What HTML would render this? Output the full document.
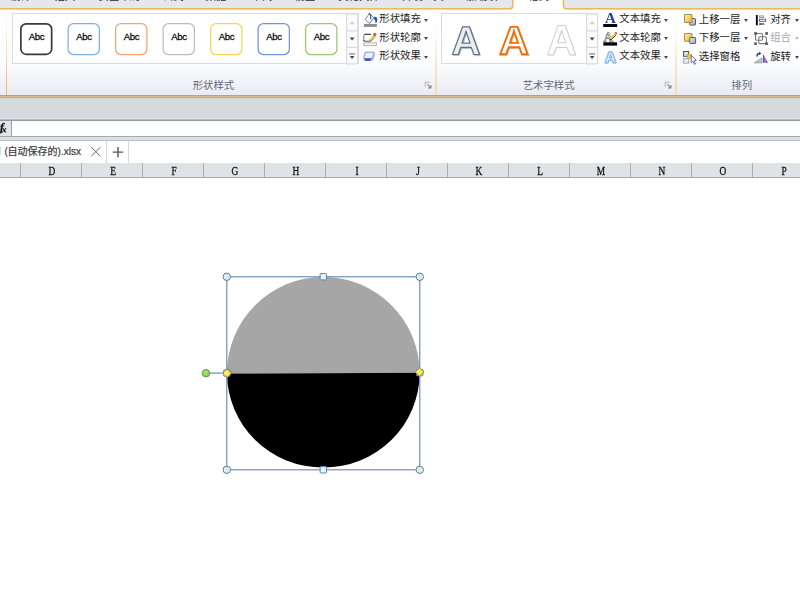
<!DOCTYPE html>
<html lang="zh-CN">
<head>
<meta charset="utf-8">
<title>Excel - 格式</title>
<style>
*{box-sizing:border-box;margin:0;padding:0}
html,body{width:800px;height:600px;overflow:hidden;background:#fff}
body{position:relative;font-family:"Liberation Sans",sans-serif;font-size:11px;color:#1a1a1a}
.abs,.cj,.ic,#stage div,#stage svg.a{position:absolute}
.cj{display:block;overflow:visible;white-space:nowrap;font-family:"Liberation Sans","Noto Sans CJK SC",sans-serif;font-size:10.4px;line-height:12.48px}
.cj.ab{font-size:9.6px;line-height:18.48px;color:#0c0c0c;letter-spacing:-.35px;-webkit-text-stroke:.28px #0c0c0c}
.cj.dt{font-size:10px;line-height:19px;color:#3a3a3a;-webkit-text-stroke:.2px #3a3a3a}
#stage{position:absolute;left:0;top:0;width:800px;height:600px;overflow:hidden}

/* tab strip */

/* ribbon body */
#rib{left:0;top:9.5px;width:800px;height:86px;background:linear-gradient(#fff 0,#fdfdfe 58%,#f8f9fb 70%,#f1f3f6 83%,#e8ebef 100%)}
#ribB1{left:0;top:95px;width:800px;height:2px;background:linear-gradient(#c79f66 0,#c79f66 50%,#d9ba8a 50%,#d9ba8a 100%)}
#ribB2{left:0;top:97px;width:800px;height:1px;background:#adb1b7}
#band{left:0;top:98px;width:800px;height:22px;background:linear-gradient(#cfd3d8 0,#d6dade 12%,#d6dade 100%)}
#bandB{left:0;top:118px;width:800px;height:3px;background:linear-gradient(#dde1e6 0,#dde1e6 33.3%,#b7bdc6 33.3%,#b7bdc6 66.6%,#939ba7 66.6%,#939ba7 100%)}
.vsep{width:2px;top:10px;height:85px;background:linear-gradient(rgba(246,214,160,0) 0,rgba(246,220,174,.12) 30%,rgba(246,220,174,.6) 62%,#f6dbac 100%)}
#ctxL{left:5.5px;top:10px;width:1.6px;height:85.5px;background:linear-gradient(rgba(243,190,100,0) 0,rgba(243,190,100,.25) 30%,#f0b862 100%)}

/* galleries */
.gal{background:#fff;border:1.2px solid #d9dce1;top:13.2px;height:51.3px}
.scol{top:13.2px;width:12px;height:51.3px;background:#f6f7f9;border:1.2px solid #d9dce1}
.sbtn{left:0;width:100%;height:17px;border-top:1.2px solid #d9dce1}
.abc{top:23px;width:32.5px;height:32.5px;font-size:9.6px;line-height:29px;text-align:center;color:#0c0c0c;letter-spacing:-.35px;-webkit-text-stroke:.28px #0c0c0c}
.abc b{font-weight:400;display:inline-block;position:relative;top:.4px;left:-.1px}
.lbl{color:#5f6573}
.arr{width:0;height:0;border-left:2.6px solid transparent;border-right:2.6px solid transparent;border-top:3px solid #4a4a4a}
.arr.dis{border-top-color:#b9bec6}

/* formula bar */
#fxbox{left:0;top:121px;width:11.5px;height:15px;background:#e1e4e8}
#fxline{left:11px;top:121px;width:1px;height:15px;background:#9aa2ad}
#fbar{left:12px;top:121px;width:788px;height:15px;background:#fff}
#fbB{left:0;top:136px;width:800px;height:1.4px;background:#a3aab4}
#fbB2{left:0;top:137.4px;width:800px;height:2.8px;background:#dde0e5}
#fbB3{left:0;top:140.2px;width:800px;height:1px;background:#b7bdc5}

/* doc tab row */
#doctab{left:0;top:141.2px;width:800px;height:21.3px;background:#fff}
.dsep{top:141px;width:1px;height:22px;background:#d8d8d8}

/* column header */
#colh{left:0;top:162.5px;width:800px;height:15.4px;background:#dfe3e8;border-bottom:1.3px solid #a2a9b2}
.csep{top:162.5px;width:1.2px;height:14.4px;background:#a9afb7}
.cl{top:165.2px;width:20px;margin-left:-10px;text-align:center;font-family:"Liberation Serif",serif;font-size:12px;line-height:13px;color:#111;transform:scaleX(.78);-webkit-text-stroke:.3px #111}
</style>
</head>
<body>
<div id="stage">

<!-- ===== tab strip ===== -->
<svg class="a" style="left:0;top:0" width="800" height="12" viewBox="0 0 800 12">
  <rect x="0" y="0" width="800" height="9.5" fill="#e4e7eb"/>
  <rect x="512.7" y="0" width="50.8" height="12" fill="#fff"/>
  <path d="M-2 8.75 H509.8 Q512.75 8.75 512.75 5.8 V-1" fill="none" stroke="#eeb95c" stroke-width="1.5"/>
  <path d="M802 8.75 H566.4 Q563.45 8.75 563.45 5.8 V-1" fill="none" stroke="#eeb95c" stroke-width="1.5"/>
</svg>
<span class="cj" style="left:-0.4px;top:-9.3px;color:#2e2e2e;">工设计</span>
<span class="cj" style="left:54.4px;top:-9.3px;color:#2e2e2e;">插入</span>
<span class="cj" style="left:98.6px;top:-9.3px;color:#2e2e2e;">页面布局</span>
<span class="cj" style="left:162.8px;top:-9.3px;color:#2e2e2e;">公式</span>
<span class="cj" style="left:205.6px;top:-9.3px;color:#2e2e2e;">数据</span>
<span class="cj" style="left:251.6px;top:-9.3px;color:#2e2e2e;">审阅</span>
<span class="cj" style="left:294.6px;top:-9.3px;color:#2e2e2e;">视图</span>
<span class="cj" style="left:338.2px;top:-9.3px;color:#2e2e2e;">美化大师</span>
<span class="cj" style="left:402.2px;top:-9.3px;color:#2e2e2e;">开发工具</span>
<span class="cj" style="left:466.4px;top:-9.3px;color:#2e2e2e;">加载项</span>
<span class="cj" style="left:528.2px;top:-9.3px;color:#2e2e2e;">格式</span>

<!-- ===== ribbon ===== -->
<div id="rib"></div>
<div id="ctxL"></div>
<div class="vsep" style="left:435px"></div>
<div class="vsep" style="left:674.6px"></div>

<!-- shape styles gallery -->
<div class="gal" style="left:12px;width:346.5px"></div>
<svg class="a" style="left:0;top:0" width="360" height="66" viewBox="0 0 360 66"><g fill="#fff"><rect x="20.85" y="23.85" width="30.8" height="30.5" rx="5.4" stroke="#3a3a3a" stroke-width="1.7"/><rect x="68.125" y="23.625" width="31.25" height="30.95" rx="5.4" stroke="#7fb0e3" stroke-width="1.25"/><rect x="115.625" y="23.625" width="31.25" height="30.95" rx="5.4" stroke="#f3a573" stroke-width="1.25"/><rect x="163.125" y="23.625" width="31.25" height="30.95" rx="5.4" stroke="#bdbdbd" stroke-width="1.25"/><rect x="210.625" y="23.625" width="31.25" height="30.95" rx="5.4" stroke="#ffd24d" stroke-width="1.25"/><rect x="258.125" y="23.625" width="31.25" height="30.95" rx="5.4" stroke="#7195d8" stroke-width="1.25"/><rect x="305.625" y="23.625" width="31.25" height="30.95" rx="5.4" stroke="#97c872" stroke-width="1.25"/></g></svg>
<span class="cj ab" style="left:28.63px;top:28.40px">Abc</span>
<span class="cj ab" style="left:76.13px;top:28.40px">Abc</span>
<span class="cj ab" style="left:123.63px;top:28.40px">Abc</span>
<span class="cj ab" style="left:171.13px;top:28.40px">Abc</span>
<span class="cj ab" style="left:218.63px;top:28.40px">Abc</span>
<span class="cj ab" style="left:266.13px;top:28.40px">Abc</span>
<span class="cj ab" style="left:313.63px;top:28.40px">Abc</span>
<svg class="a" style="left:344.9px;top:12px" width="15" height="54" viewBox="345.5 12 15 54">
  <path d="M347.1 13.8 H356.1 Q358.2 13.8 358.2 15.9 V61.8 Q358.2 63.9 356.1 63.9 H347.1 Z" fill="#fbfbfc" stroke="#d9dce1" stroke-width="1.2"/>
  <path d="M347.1 30.8 H358.2 M347.1 47.4 H358.2" stroke="#d9dce1" stroke-width="1.2"/>
  <path d="M350.1 24.2 L352.6 21.2 L355.1 24.2 Z" fill="#c9cdd3"/>
  <path d="M350.2 37.6 H355.0 L352.6 40.6 Z" fill="#454545"/>
  <path d="M349.5 53.9 H355.7" stroke="#7b7b7b" stroke-width="1.1"/>
  <path d="M350.2 56 H355.0 L352.6 59 Z" fill="#454545"/>
</svg>

<!-- shape fill / outline / effects -->
<svg class="a" style="left:360px;top:10px" width="24" height="18" viewBox="360 10 24 18">
  <defs><linearGradient id="bk" x1="0" y1="0" x2="1" y2="1"><stop offset=".45" stop-color="#fff"/><stop offset="1" stop-color="#a9c4ee"/></linearGradient></defs>
  <rect x="363.9" y="24" width="13" height="2.9" fill="#8e8e8f"/>
  <path d="M374.2 16.9 C376.4 16.4 377.6 18 377.3 20.2 C377.1 21.6 376.6 22.6 375.6 23.4 C375.5 21.4 375 19.8 373.6 18.6 Z" fill="#2355c3"/>
  <path d="M365.2 19.6 L369.4 13.3 L374.1 17.9 L369.6 23.7 Z" fill="url(#bk)" stroke="#5d7dbd" stroke-width=".9" stroke-linejoin="round"/>
  <path d="M369.2 13.6 L370.6 15 L370.7 18.6" fill="none" stroke="#3a4a6a" stroke-width="1.1" stroke-linecap="round"/>
</svg>
<span class="cj" style="left:379.3px;top:13.2px;color:#1c1c1c;">形状填充</span>
<div class="arr" style="left:424px;top:18.6px"></div>

<svg class="a" style="left:360px;top:29px" width="24" height="18" viewBox="360 29 24 18">
  <rect x="363.8" y="42.9" width="12.6" height="2.5" fill="#fdfdfb" stroke="#b3afa0" stroke-width="1"/>
  <path d="M363.8 41 V35.4 Q363.8 34.4 364.8 34.4 H370.9" fill="none" stroke="#85858f" stroke-width="1.1"/>
  <path d="M364.6 34.4 H370.9" fill="none" stroke="#45454d" stroke-width="1.1"/>
  <path d="M363.8 40 Q363.8 41.3 365.2 41.3 H368.4" fill="none" stroke="#55555f" stroke-width="1.1"/>
  <path d="M368.5 41.8 L369 39.2 L373.6 34.4 L375.4 36.2 L370.9 41 Z" fill="#ead55f"/>
  <path d="M375.2 36.6 L370.8 41.2 L368.5 41.8" fill="none" stroke="#2a2a2a" stroke-width=".9" stroke-dasharray="1.1 .5"/>
  <path d="M368.5 41.8 L368.9 40 L370.1 41.3 Z" fill="#6d7f95"/>
  <circle cx="374.7" cy="34.4" r="1.7" fill="#d2603f"/>
</svg>
<span class="cj" style="left:379.3px;top:31.7px;color:#1c1c1c;">形状轮廓</span>
<div class="arr" style="left:424px;top:37.2px"></div>

<svg class="a" style="left:360px;top:48px" width="24" height="18" viewBox="360 48 24 18">
  <defs><filter id="bl3" x="-30%" y="-30%" width="160%" height="160%"><feGaussianBlur stdDeviation=".45"/></filter></defs>
  <g filter="url(#bl3)">
  <path d="M366.2 51.6 H372.6 Q375.4 51.6 374.9 54.4 L374 58.4 Q373.4 61 370.6 61 H366 Q362.6 61 363.2 57.8 L364 54 Q364.6 51.6 366.2 51.6 Z" fill="#a3b8ea"/>
  <path d="M364.6 58.2 H371.6 L371 59.8 Q370.4 61 369 61 H366.4 Q364.4 61 364.6 58.2 Z" fill="#3b5fc6"/>
  <path d="M366.2 53 H373.2 L371.4 58 H364.4 Z" fill="#eef3fc"/>
  </g>
</svg>
<span class="cj" style="left:379.3px;top:50.2px;color:#1c1c1c;">形状效果</span>
<div class="arr" style="left:424px;top:55.8px"></div>

<span class="cj" style="left:192.7px;top:79.6px;color:#636978;">形状样式</span>
<svg class="a" style="left:424px;top:81px" width="9" height="9" viewBox="0 0 9 9">
  <path d="M1.2 6 V1.2 H6" fill="none" stroke="#b3b7be" stroke-width="1"/>
  <path d="M3.2 3.2 L7 7 M7 4 V7 H4" fill="none" stroke="#868b94" stroke-width="1.1"/>
</svg>

<!-- wordart gallery -->
<div class="gal" style="left:441px;width:157px"></div>
<svg class="a" style="left:441px;top:13px" width="146" height="52" viewBox="441 13 146 52">
  <defs>
    <filter id="sh1" x="-20%" y="-20%" width="150%" height="150%"><feGaussianBlur stdDeviation=".8"/></filter>
    <path id="bigA" d="M1133 0 1008 -360H471L346 0H51L565 -1409H913L1425 0ZM739 -1192 733 -1170Q723 -1134 709 -1088Q695 -1042 537 -582H942L803 -987L760 -1123Z"/>
  </defs>
  <use href="#bigA" transform="translate(452.5 55.6) scale(.01965)" fill="#8d96a3" stroke="#8d96a3" stroke-width="50" opacity=".6" filter="url(#sh1)"/>
  <use href="#bigA" transform="translate(451.5 54.5) scale(.01965)" fill="#ededee" stroke="#5a708f" stroke-width="62" stroke-linejoin="round"/>
  <use href="#bigA" transform="translate(500.1 55.2) scale(.0199 .0194)" fill="#a79a8c" stroke="#a79a8c" stroke-width="90" opacity=".5" filter="url(#sh1)"/>
  <use href="#bigA" transform="translate(499.3 54.2) scale(.0199 .0194)" fill="#fff" stroke="#f06f0a" stroke-width="98" stroke-linejoin="miter"/>
  <use href="#bigA" transform="translate(547.2 55.6) scale(.0205 .0209)" fill="#bdbdbd" opacity=".5" filter="url(#sh1)"/>
  <use href="#bigA" transform="translate(546.5 54.9) scale(.0205 .0209)" fill="#fff" stroke="#c4c4c4" stroke-width="42"/>
</svg>
<svg class="a" style="left:584.6px;top:12px" width="15" height="54" viewBox="585.2 12 15 54">
  <path d="M586.8000000000001 13.8 H595.8000000000001 Q597.9000000000001 13.8 597.9000000000001 15.9 V61.8 Q597.9000000000001 63.9 595.8000000000001 63.9 H586.8000000000001 Z" fill="#fbfbfc" stroke="#d9dce1" stroke-width="1.2"/>
  <path d="M586.8000000000001 30.8 H597.9000000000001 M586.8000000000001 47.4 H597.9000000000001" stroke="#d9dce1" stroke-width="1.2"/>
  <path d="M589.8000000000001 24.2 L592.3000000000001 21.2 L594.8000000000001 24.2 Z" fill="#c9cdd3"/>
  <path d="M589.9000000000001 37.6 H594.7 L592.3000000000001 40.6 Z" fill="#454545"/>
  <path d="M589.2 53.9 H595.4000000000001" stroke="#7b7b7b" stroke-width="1.1"/>
  <path d="M589.9000000000001 56 H594.7 L592.3000000000001 59 Z" fill="#454545"/>
</svg>

<!-- text fill / outline / effects -->
<svg class="a" style="left:600px;top:10px" width="22" height="19" viewBox="600 10 22 19">
  <path d="M428 -73V0H20V-73L120 -100L597 -1352H887L1362 -100L1464 -73V0H867V-73L1022 -100L894 -447H379L256 -100ZM641 -1150 420 -557H856Z" transform="translate(604.9 23.1) scale(.00745)" fill="#1f3f9b"/>
  <rect x="603.2" y="24" width="14" height="3" fill="#080808"/>
</svg>
<span class="cj" style="left:619.3px;top:13.2px;color:#1c1c1c;">文本填充</span>
<div class="arr" style="left:664px;top:18.6px"></div>

<svg class="a" style="left:600px;top:29px" width="22" height="19" viewBox="600 29 22 19">
  <path d="M461 -53V0H20V-53L172 -80L629 -1352H819L1294 -80L1464 -53V0H897V-53L1077 -80L944 -467H416L281 -80ZM676 -1208 446 -557H913Z" transform="translate(603.16 41.8) scale(0.00695)" fill="#fff" stroke="#6f6f78" stroke-width="108" stroke-linejoin="round"/>
  <path d="M609 39.9 L609.6 37.6 L614.4 33 L616.2 34.8 L611.3 39.3 Z" fill="#ead24c"/>
  <path d="M616 35.2 L611.2 39.5 L609 39.9" fill="none" stroke="#2a2a2a" stroke-width=".9"/>
  <path d="M609 39.9 L609.4 38.4 L610.4 39.5 Z" fill="#555"/>
  <path d="M614.4 33 L615.4 32.1 Q616.6 31.9 617.2 33 L617.3 33.9 L616.2 34.8 Z" fill="#d6604a"/>
  <rect x="603.3" y="42.3" width="13.8" height="3.3" fill="#050505"/>
</svg>
<span class="cj" style="left:619.3px;top:31.7px;color:#1c1c1c;">文本轮廓</span>
<div class="arr" style="left:664px;top:37.2px"></div>

<svg class="a" style="left:598px;top:46px" width="26" height="22" viewBox="598 46 26 22">
  <defs><filter id="gl" x="-40%" y="-40%" width="180%" height="180%"><feGaussianBlur stdDeviation=".75"/></filter></defs>
  <path d="M1133 0 1008 -360H471L346 0H51L565 -1409H913L1425 0ZM739 -1192 733 -1170Q723 -1134 709 -1088Q695 -1042 537 -582H942L803 -987L760 -1123Z" transform="translate(605.1 62.6) scale(.0074)" fill="#7dd2f3" stroke="#7dd2f3" stroke-width="330" stroke-linejoin="round" filter="url(#gl)"/>
  <path d="M1133 0 1008 -360H471L346 0H51L565 -1409H913L1425 0ZM739 -1192 733 -1170Q723 -1134 709 -1088Q695 -1042 537 -582H942L803 -987L760 -1123Z" transform="translate(605.1 62.6) scale(.0074)" fill="#eeeeff" stroke="#889fe8" stroke-width="78" stroke-linejoin="round"/>
</svg>
<span class="cj" style="left:619.3px;top:50.2px;color:#1c1c1c;">文本效果</span>
<div class="arr" style="left:664px;top:55.8px"></div>

<span class="cj" style="left:522.7px;top:79.6px;color:#636978;">艺术字样式</span>
<svg class="a" style="left:664px;top:81px" width="9" height="9" viewBox="0 0 9 9">
  <path d="M1.2 6 V1.2 H6" fill="none" stroke="#b3b7be" stroke-width="1"/>
  <path d="M3.2 3.2 L7 7 M7 4 V7 H4" fill="none" stroke="#868b94" stroke-width="1.1"/>
</svg>

<!-- arrange group -->
<svg class="a" style="left:680px;top:10px" width="24" height="18" viewBox="680 10 24 18">
  <defs>
    <linearGradient id="yel" x1="0" y1="0" x2="1" y2="1"><stop offset="0" stop-color="#fdeb9c"/><stop offset=".5" stop-color="#f8d460"/><stop offset="1" stop-color="#f2a922"/></linearGradient>
    <linearGradient id="gry" x1="0" y1="0" x2="1" y2="1"><stop offset="0" stop-color="#eceef1"/><stop offset="1" stop-color="#9aa2ad"/></linearGradient>
  </defs>
  <rect x="689.7" y="18.6" width="5.8" height="6.5" rx=".6" fill="url(#gry)" stroke="#4d627c" stroke-width="1"/>
  <rect x="684.5" y="14.5" width="7.5" height="8" rx=".4" fill="url(#yel)" stroke="#9c8252" stroke-width=".9"/>
</svg>
<span class="cj" style="left:698.8px;top:13.6px;color:#1c1c1c;">上移一层</span>
<div class="arr" style="left:743.8px;top:18.6px"></div>

<svg class="a" style="left:680px;top:29px" width="24" height="18" viewBox="680 29 24 18">
  <rect x="684.5" y="33.5" width="7.5" height="7.8" rx=".4" fill="url(#yel)" stroke="#9c8252" stroke-width=".9"/>
  <rect x="689.7" y="37.5" width="5.9" height="6" rx=".6" fill="url(#gry)" stroke="#4d627c" stroke-width="1"/>
</svg>
<span class="cj" style="left:698.8px;top:32.1px;color:#1c1c1c;">下移一层</span>
<div class="arr" style="left:743.8px;top:37.2px"></div>

<svg class="a" style="left:680px;top:48px" width="24" height="18" viewBox="680 48 24 18">
  <rect x="683.6" y="51.5" width="5" height="4.8" fill="#e3e5ea" stroke="#3d4c78" stroke-width="1"/>
  <rect x="683.6" y="58.6" width="5" height="4.6" fill="#e6e8ed" stroke="#a3abc2" stroke-width="1"/>
  <rect x="687.2" y="54.2" width="4.4" height="4.4" fill="#f5c53c" stroke="#c49a38" stroke-width=".6"/>
  <path d="M691.2 55.2 L691.2 62.6 L692.9 61.3 L694.3 64.4 L695.5 63.8 L694.1 60.8 L696.4 60.4 Z" fill="#f4f6fb" stroke="#55678a" stroke-width=".9" stroke-linejoin="round"/>
</svg>
<span class="cj" style="left:698.8px;top:50.6px;color:#1c1c1c;">选择窗格</span>

<svg class="a" style="left:750px;top:10px" width="24" height="18" viewBox="750 10 24 18">
  <rect x="755.9" y="15" width="1.9" height="10.3" fill="#0a0a0a"/>
  <rect x="759.4" y="15.9" width="4.2" height="1.6" fill="#eee" stroke="#8b8b8b" stroke-width=".8"/>
  <rect x="759.4" y="19.2" width="6.4" height="2.1" fill="#fff" stroke="#3b5b92" stroke-width=".9"/>
  <path d="M758.8 24 L760.4 22.9 V23.5 H764.4 V24.6 H760.4 V25.2 Z" fill="#0a0a0a"/>
</svg>
<span class="cj" style="left:770.2px;top:13.6px;color:#1c1c1c;">对齐</span>
<div class="arr" style="left:794.6px;top:18.6px"></div>

<svg class="a" style="left:750px;top:29px" width="24" height="18" viewBox="750 29 24 18">
  <g fill="none" stroke="#7b7b7b" stroke-width="1.1">
    <rect x="755.6" y="33.5" width="6.9" height="6.7" rx="1"/>
    <rect x="758.8" y="36.7" width="7.6" height="6.9" rx="1"/>
  </g>
  <g fill="#5c5c5c">
    <rect x="754.2" y="32.1" width="2.7" height="2.7"/><rect x="765.2" y="32.1" width="2.7" height="2.7"/>
    <rect x="754.2" y="42.3" width="2.7" height="2.7"/><rect x="765.2" y="42.3" width="2.7" height="2.7"/>
  </g>
</svg>
<span class="cj" style="left:770.2px;top:32.1px;color:#a2a8b3;">组合</span>
<div class="arr dis" style="left:794.6px;top:37.2px"></div>

<svg class="a" style="left:750px;top:48px" width="24" height="18" viewBox="750 48 24 18">
  <defs><linearGradient id="pur" x1="0" y1="0" x2="1" y2="0"><stop offset="0" stop-color="#6a3fb5"/><stop offset=".45" stop-color="#9a80d6"/><stop offset="1" stop-color="#5b2fa6"/></linearGradient></defs>
  <path d="M754.3 62.8 L762 58 V62.8 Z" fill="#c3c9d0" stroke="#7c858f" stroke-width=".7" stroke-linejoin="round"/>
  <path d="M763 53.8 L768 62.8 H763 Z" fill="url(#pur)"/>
  <path d="M757.3 56.6 C756.6 54.6 757.8 53.4 759.4 53.4" fill="none" stroke="#2344a3" stroke-width="1.5"/>
  <path d="M759 51.8 L761.4 53.5 L759 55.2 Z" fill="#2344a3"/>
</svg>
<span class="cj" style="left:770.2px;top:50.6px;color:#1c1c1c;">旋转</span>
<div class="arr" style="left:794.6px;top:55.8px"></div>

<span class="cj" style="left:731.3px;top:79.6px;color:#636978;">排列</span>

<!-- ribbon bottom & gray band -->
<div id="ribB1"></div>
<div id="ribB2"></div>
<div id="band"></div>
<div id="bandB"></div>

<!-- ===== formula bar ===== -->
<div id="fxbox"></div>
<div id="fxline"></div>
<div id="fbar"></div>
<svg class="a" style="left:0;top:121px" width="11" height="15" viewBox="0 121 11 15">
  <path d="M222 -836H60L72 -905L241 -944L264 -1066Q301 -1264 408 -1353Q515 -1442 693 -1442Q784 -1442 852 -1421L813 -1199H749L737 -1311Q716 -1332 681 -1332Q628 -1332 595 -1278Q562 -1225 538 -1098L509 -940H715L697 -836H491L269 436H0Z" transform="translate(0.07 130.83) scale(0.00543)" fill="#111" stroke="#111" stroke-width="70"/>
  <path d="M439 -374 274 -236Q238 -205 218 -184Q199 -162 190 -146Q182 -129 182 -104Q182 -74 224 -65L212 0H-9Q-25 -13 -25 -43Q-25 -78 8 -120Q40 -161 112 -221L396 -460L194 -850L108 -875L119 -940H418L583 -615L685 -700Q734 -740 758 -772Q783 -805 783 -836Q783 -865 728 -875L740 -940H953Q974 -924 974 -897Q974 -822 836 -707L628 -533L856 -86L942 -65L931 0H629Z" transform="translate(2.20 132.2) scale(0.00413 0.00394)" fill="#111" stroke="#111" stroke-width="70"/>
</svg>
<div id="fbB"></div>
<div id="fbB2"></div>
<div id="fbB3"></div>

<!-- ===== document tab row ===== -->
<div id="doctab"></div>
<div class="abs" style="left:0;top:147px;width:1px;height:8px;background:linear-gradient(#7ccaf2 0,#b9e8fb 18%,#b9e8fb 100%)"></div>
<span class="cj dt" style="left:4.4px;top:142px">(</span>
<span class="cj" style="left:7.6px;top:145.5px;font-size:10px;line-height:12px;color:#3a3a3a;-webkit-text-stroke:.2px #3a3a3a">自动保存的</span>
<span class="cj dt" style="left:57.6px;top:142px">).xlsx</span>
<svg class="a" style="left:89px;top:145px" width="14" height="14" viewBox="0 0 14 14"><path d="M2.2 2.2 L11.4 11.2 M11.4 2.2 L2.2 11.2" stroke="#666" stroke-width="1" fill="none"/></svg>
<div class="dsep" style="left:106px"></div>
<svg class="a" style="left:111px;top:145px" width="14" height="14" viewBox="0 0 14 14"><path d="M7 2 V12.2 M1.8 7.1 H12.2" stroke="#555" stroke-width="1.4" fill="none"/></svg>
<div class="dsep" style="left:128px"></div>

<!-- ===== column headers ===== -->
<div id="colh"></div>
<div class="csep" style="left:20px"></div><div class="cl" style="left:52px">D</div>
<div class="csep" style="left:81px"></div><div class="cl" style="left:113px">E</div>
<div class="csep" style="left:142px"></div><div class="cl" style="left:174px">F</div>
<div class="csep" style="left:203px"></div><div class="cl" style="left:235px">G</div>
<div class="csep" style="left:264px"></div><div class="cl" style="left:296px">H</div>
<div class="csep" style="left:325px"></div><div class="cl" style="left:357px">I</div>
<div class="csep" style="left:386px"></div><div class="cl" style="left:418px">J</div>
<div class="csep" style="left:447px"></div><div class="cl" style="left:479px">K</div>
<div class="csep" style="left:508px"></div><div class="cl" style="left:540px">L</div>
<div class="csep" style="left:569px"></div><div class="cl" style="left:601px">M</div>
<div class="csep" style="left:630px"></div><div class="cl" style="left:662px">N</div>
<div class="csep" style="left:691px"></div><div class="cl" style="left:723px">O</div>
<div class="csep" style="left:752px"></div><div class="cl" style="left:784px">P</div>

<!-- ===== sheet shape ===== -->
<svg class="a" style="left:195px;top:262px" width="240" height="222" viewBox="195 262 240 222">
  <defs>
    <linearGradient id="hc" x1="0" y1="0" x2="1" y2="0"><stop offset="0" stop-color="#fbfefe"/><stop offset=".5" stop-color="#c2ebee"/><stop offset="1" stop-color="#f6fcfd"/></linearGradient>
    <radialGradient id="hg" cx=".45" cy=".4" r=".6"><stop offset="0" stop-color="#a6f060"/><stop offset="1" stop-color="#6fcf2f"/></radialGradient>
    <linearGradient id="hy" x1="0" y1="0" x2="1" y2="0"><stop offset="0" stop-color="#fffbc0"/><stop offset=".5" stop-color="#fff23a"/><stop offset="1" stop-color="#ffe81a"/></linearGradient>
    <clipPath id="top"><rect x="220" y="270" width="210" height="103.1" transform="rotate(-0.24 323.3 373)"/></clipPath>
    <clipPath id="bot"><rect x="220" y="373.1" width="210" height="110" transform="rotate(-0.24 323.3 373)"/></clipPath>
  </defs>
  <circle cx="323.3" cy="373.3" r="96.4" fill="#a6a6a6" clip-path="url(#top)"/>
  <ellipse cx="323.3" cy="373.2" rx="96.3" ry="94.4" fill="#000" clip-path="url(#bot)"/>
  <rect x="226.8" y="276.8" width="193" height="193" fill="none" stroke="#6585b0" stroke-width="1.1"/>
  <path d="M206 373.1 H227" stroke="#5f86b5" stroke-width="1.1"/>
  <!-- corner handles -->
  <g fill="url(#hc)" stroke="#6b7684" stroke-width="1">
    <circle cx="226.8" cy="276.8" r="3.7"/><circle cx="419.8" cy="276.8" r="3.7"/>
    <circle cx="226.8" cy="469.8" r="3.7"/><circle cx="419.8" cy="469.8" r="3.7"/>
  </g>
  <!-- edge handles -->
  <g fill="#d9f4f7" stroke="#5f83b3" stroke-width="1">
    <rect x="320.1" y="273.5" width="6.4" height="6.4" rx=".8"/>
    <rect x="320.1" y="466.6" width="6.4" height="6.4" rx=".8"/>
    <rect x="223.6" y="369.9" width="6.4" height="6.4" rx=".8"/>
    <rect x="416.6" y="369.4" width="6.4" height="6.4" rx=".8"/>
  </g>
  <path d="M323.3 274.5 V279 M323.3 467.6 V472" stroke="#fff" stroke-width="1"/>
  <!-- adjust diamonds -->
  <g fill="url(#hy)" stroke="#6b6a3e" stroke-width=".7">
    <path d="M227.1 369 L231.4 373.2 L227.1 377.4 L222.8 373.2 Z"/>
    <path d="M419.6 367.8 L423.9 372 L419.6 376.2 L415.3 372 Z"/>
  </g>
  <!-- rotate handle -->
  <circle cx="206" cy="373.2" r="3.8" fill="url(#hg)" stroke="#7d8f78" stroke-width="1"/>
</svg>

</div>
</body>
</html>
